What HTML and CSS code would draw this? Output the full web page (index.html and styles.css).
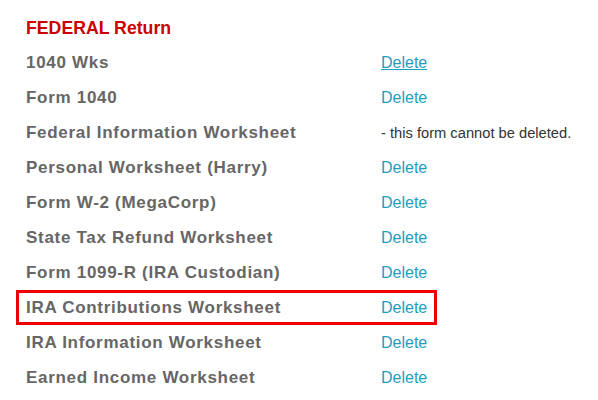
FILE: index.html
```html
<!DOCTYPE html>
<html>
<head>
<meta charset="utf-8">
<link rel="stylesheet" href="styles.css">
</head>
<body>
<div class="page">
  <h2 class="title">FEDERAL Return</h2>
  <div class="row"><span class="label">1040 Wks</span><a class="del hover" href="#">Delete</a></div>
  <div class="row"><span class="label">Form 1040</span><a class="del" href="#">Delete</a></div>
  <div class="row"><span class="label">Federal Information Worksheet</span><span class="note">- this form cannot be deleted.</span></div>
  <div class="row"><span class="label">Personal Worksheet (Harry)</span><a class="del" href="#">Delete</a></div>
  <div class="row"><span class="label">Form W-2 (MegaCorp)</span><a class="del" href="#">Delete</a></div>
  <div class="row"><span class="label">State Tax Refund Worksheet</span><a class="del" href="#">Delete</a></div>
  <div class="row"><span class="label">Form 1099-R (IRA Custodian)</span><a class="del" href="#">Delete</a></div>
  <div class="row highlight"><span class="label">IRA Contributions Worksheet</span><a class="del" href="#">Delete</a></div>
  <div class="row"><span class="label">IRA Information Worksheet</span><a class="del" href="#">Delete</a></div>
  <div class="row"><span class="label">Earned Income Worksheet</span><a class="del" href="#">Delete</a></div>
</div>
</body>
</html>
```
FILE: styles.css
```css
html, body {
  margin: 0;
  padding: 0;
  background: #fff;
}
body {
  font-family: "Liberation Sans", Arial, sans-serif;
}
.page {
  padding: 10px 0 0 26px;
}
.title {
  margin: 0;
  height: 35px;
  line-height: 37px;
  font-size: 17.7px;
  font-weight: bold;
  color: #cc0000;
}
.row {
  display: flex;
  align-items: center;
  height: 35px;
  box-sizing: border-box;
}
.label {
  width: 355px;
  flex: none;
  font-size: 17px;
  letter-spacing: 0.7px;
  font-weight: bold;
  color: #666;
}
.del {
  font-size: 16px;
  color: #1e9dbd;
  text-decoration: none;
}
.del.hover {
  text-decoration: underline;
}
.note {
  font-size: 14.7px;
  color: #333;
}
.highlight {
  width: 421px;
  margin-left: -10px;
  padding-left: 7px;
  border: 3px solid #ee0000;
}
```
